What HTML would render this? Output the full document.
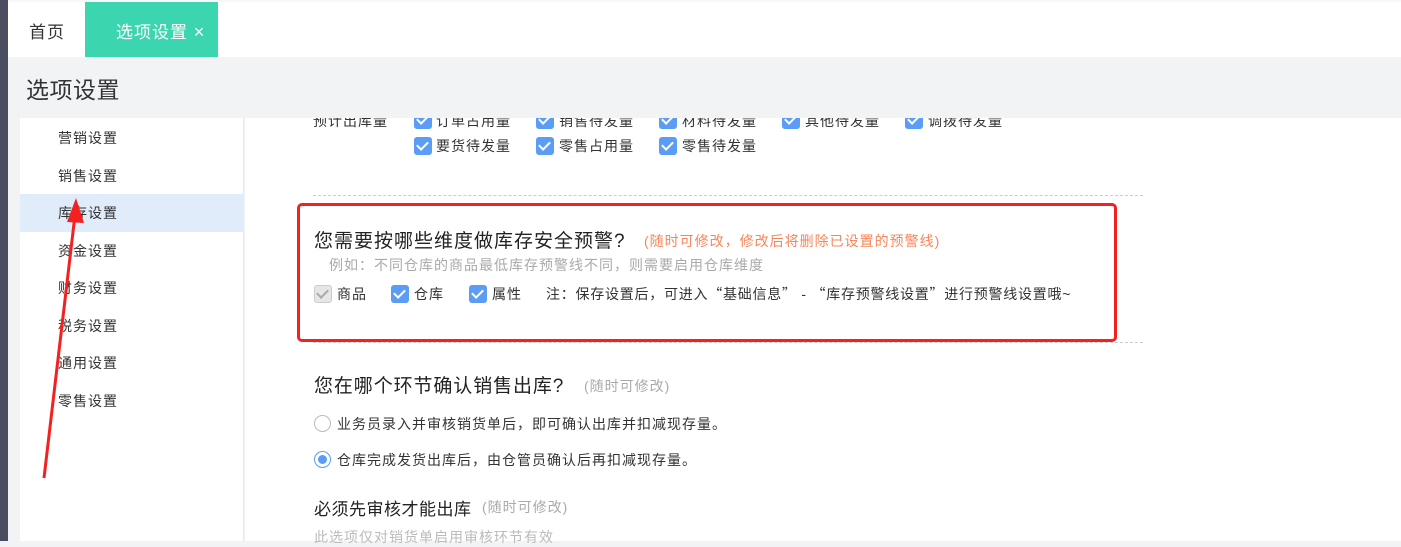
<!DOCTYPE html>
<html><head><meta charset="utf-8"><style>
*{margin:0;padding:0;box-sizing:border-box}
body{width:1401px;height:541px;overflow:hidden;background:#f2f3f5;position:relative;font-family:"Liberation Sans","Noto Sans CJK SC",sans-serif;color:#333}
.a{position:absolute;white-space:nowrap}
.cb{position:absolute;width:18px;height:18px;border-radius:3px;background:#5b9cf5}
.cb::after{content:"";position:absolute;left:5px;top:2px;width:5px;height:9px;border:solid #fff;border-width:0 2px 2px 0;transform:rotate(45deg)}
.cb.g{background:#e6e6e6;border:1px solid #ccc}
.cb.g::after{border-color:#aaa;left:4px;top:1px}
.t{font-size:14px;color:#333;letter-spacing:1px}
.cj{font-family:"Noto Sans CJK SC",sans-serif}
</style></head><body>
<div class="a" style="left:0;top:0;width:8px;height:541px;background:#4b4e61"></div>
<div class="a" style="left:8px;top:0;width:1393px;height:2px;background:#f7f7f9"></div>
<div class="a" style="left:8px;top:2px;width:1393px;height:55px;background:#fff"></div>
<div class="a" style="left:29px;top:18px;font-size:17px;color:#333;letter-spacing:1px">首页</div>
<div class="a" style="left:85px;top:2px;width:133px;height:55px;background:#3bd6b0"></div>
<div class="a" style="left:116px;top:18px;font-size:17px;color:#fff;letter-spacing:1px">选项设置 <span style="font-size:18px">×</span></div>
<div class="a" style="left:26px;top:71px;font-size:23px;color:#333;letter-spacing:0.5px">选项设置</div>
<div class="a" style="left:20px;top:118px;width:224px;height:423px;background:#fff;border-right:1px solid #e8e8e8"></div>
<div class="a" style="left:245px;top:118px;width:1156px;height:423px;background:#fff"></div>
<div class="a" style="left:20px;top:194px;width:224px;height:38px;background:#e1ecfb"></div>
<div class="a t" style="left:58px;top:128px">营销设置</div>
<div class="a t" style="left:58px;top:166px">销售设置</div>
<div class="a t" style="left:58px;top:203px">库存设置</div>
<div class="a t" style="left:58px;top:241px">资金设置</div>
<div class="a t" style="left:58px;top:278px">财务设置</div>
<div class="a t" style="left:58px;top:316px">税务设置</div>
<div class="a t" style="left:58px;top:353px">通用设置</div>
<div class="a t" style="left:58px;top:391px">零售设置</div>
<div class="a" style="left:245px;top:118px;width:1156px;height:20px;overflow:hidden">
<div class="a t" style="left:68px;top:-7px">预计出库量</div>
<div class="cb" style="left:169px;top:-7px"></div><div class="a t" style="left:191px;top:-7px">订单占用量</div>
<div class="cb" style="left:291px;top:-7px"></div><div class="a t" style="left:314px;top:-7px">销售待发量</div>
<div class="cb" style="left:414px;top:-7px"></div><div class="a t" style="left:437px;top:-7px">材料待发量</div>
<div class="cb" style="left:537px;top:-7px"></div><div class="a t" style="left:560px;top:-7px">其他待发量</div>
<div class="cb" style="left:660px;top:-7px"></div><div class="a t" style="left:683px;top:-7px">调拨待发量</div>
</div>
<div class="cb" style="left:414px;top:137px"></div><div class="a t" style="left:436px;top:136px">要货待发量</div>
<div class="cb" style="left:536px;top:137px"></div><div class="a t" style="left:559px;top:136px">零售占用量</div>
<div class="cb" style="left:659px;top:137px"></div><div class="a t" style="left:682px;top:136px">零售待发量</div>
<div class="a" style="left:313px;top:195px;width:830px;border-top:1px dashed #ccc"></div>
<div class="a" style="left:313px;top:342px;width:830px;border-top:1px dashed #ccc"></div>
<div class="a" style="left:297px;top:203px;width:820px;height:139px;border:3px solid #f52020;border-radius:5px"></div>
<div class="a" style="left:314px;top:226px;font-size:19px;color:#222;letter-spacing:1px">您需要按哪些维度做库存安全预警?</div>
<div class="a" style="left:644px;top:231px;font-size:14px;color:#f8855a;letter-spacing:1px">(随时可修改，修改后将删除已设置的预警线)</div>
<div class="a" style="left:329px;top:255px;font-size:14px;color:#aaa;letter-spacing:1px">例如：不同仓库的商品最低库存预警线不同，则需要启用仓库维度</div>
<div class="cb g" style="left:314px;top:285px"></div><div class="a t" style="left:337px;top:284px">商品</div>
<div class="cb" style="left:391px;top:285px"></div><div class="a t" style="left:414px;top:284px">仓库</div>
<div class="cb" style="left:469px;top:285px"></div><div class="a t" style="left:492px;top:284px">属性</div>
<div class="a t" style="left:546px;top:284px;letter-spacing:0.75px">注：保存设置后，可进入<span class="cj">“</span>基础信息<span class="cj">”</span> - <span class="cj">“</span>库存预警线设置<span class="cj">”</span>进行预警线设置哦~</div>
<div class="a" style="left:314px;top:371px;font-size:19px;color:#222;letter-spacing:0.9px">您在哪个环节确认销售出库?</div>
<div class="a" style="left:584px;top:376px;font-size:14px;color:#aaa;letter-spacing:1px">(随时可修改)</div>
<div class="a" style="left:314px;top:415px;width:17px;height:17px;border:1px solid #bbb;border-radius:50%"></div>
<div class="a t" style="left:337px;top:414px">业务员录入并审核销货单后，即可确认出库并扣减现存量。</div>
<div class="a" style="left:314px;top:451px;width:17px;height:17px;border:1px solid #5b9cf5;border-radius:50%"><div style="margin:3px;width:9px;height:9px;border-radius:50%;background:#5b9cf5"></div></div>
<div class="a t" style="left:337px;top:450px">仓库完成发货出库后，由仓管员确认后再扣减现存量。</div>
<div class="a" style="left:314px;top:495px;font-size:17px;color:#222;letter-spacing:0.5px">必须先审核才能出库</div>
<div class="a" style="left:482px;top:497px;font-size:14px;color:#aaa;letter-spacing:1px">(随时可修改)</div>
<div class="a" style="left:314px;top:527px;font-size:14px;color:#bbb;letter-spacing:1px">此选项仅对销货单启用审核环节有效</div>
<svg class="a" style="left:0;top:0" width="1401" height="541"><line x1="44" y1="478" x2="75" y2="215" stroke="#f52020" stroke-width="3"/><polygon points="76,198 67,222 84,223" fill="#f52020"/></svg>
</body></html>
